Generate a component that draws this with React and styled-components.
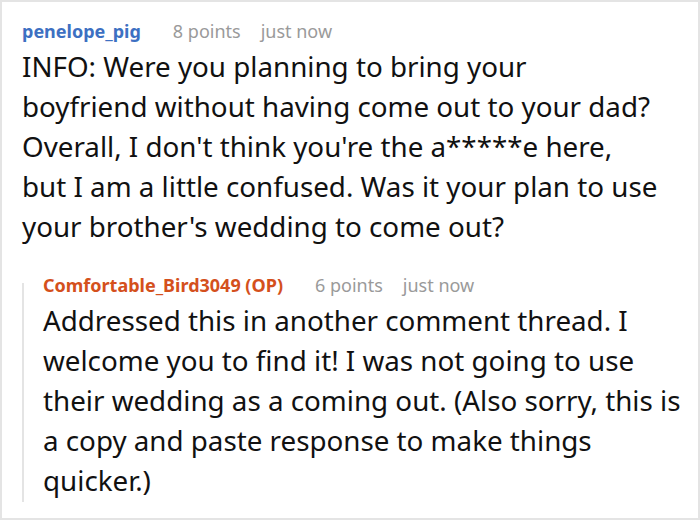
import React from 'react';
import styled, { createGlobalStyle } from 'styled-components';

const GlobalStyle = createGlobalStyle`
  html, body {
    margin: 0;
    padding: 0;
    background: #fff;
  }
  body {
    font-family: "Noto Sans", "Open Sans", sans-serif;
  }
`

const Frame = styled.div`
  width: 700px;
  height: 520px;
  box-sizing: border-box;
  border: 2px solid #e4e4e4;
  padding: 17px 0 0 20px;
  overflow: hidden;
`

const Comment = styled.div`
  display: flex;
  flex-direction: column;
`

const Header = styled.div`
  display: flex;
  align-items: baseline;
  gap: 20px;
  font-size: 18px;
  line-height: 24px;
  white-space: nowrap;
`

const Author = styled.span`
  font-weight: bold;
  color: ${p => p.op ? '#d4501c' : '#3d70c2'};
  margin-right: 12px;
`

const Meta = styled.span`
  color: #9a9a9a;
`

const Body = styled.p`
  margin: 3px 0 0 0;
  font-size: 27.75px;
  line-height: 40px;
  color: #111;
  white-space: nowrap;
`

const Replies = styled.div`
  margin-top: 27px;
  padding: 0 0 2px 21px;
  background: linear-gradient(#e4e4e4, #e4e4e4) no-repeat 0 10px / 2px calc(100% - 10px);
`

const comments = {
  parent: {
    author: 'penelope_pig',
    points: '8 points',
    time: 'just now',
    lines: [
      'INFO: Were you planning to bring your',
      'boyfriend without having come out to your dad?',
      "Overall, I don't think you're the a*****e here,",
      'but I am a little confused. Was it your plan to use',
      "your brother's wedding to come out?",
    ],
  },
  reply: {
    author: 'Comfortable_Bird3049 (OP)',
    points: '6 points',
    time: 'just now',
    lines: [
      'Addressed this in another comment thread. I',
      'welcome you to find it! I was not going to use',
      'their wedding as a coming out. (Also sorry, this is',
      'a copy and paste response to make things',
      'quicker.)',
    ],
  },
}

const CommentBlock = ({ data, op }) => (
  <Comment>
    <Header>
      <Author op={op}>{data.author}</Author>
      <Meta>{data.points}</Meta>
      <Meta>{data.time}</Meta>
    </Header>
    <Body>
      {data.lines.map((l, i) => (
        <React.Fragment key={i}>{l}{i < data.lines.length - 1 && <br />}</React.Fragment>
      ))}
    </Body>
  </Comment>
)

export default function App() {
  return (
    <>
      <GlobalStyle />
      <Frame>
        <CommentBlock data={comments.parent} />
        <Replies>
          <CommentBlock data={comments.reply} op />
        </Replies>
      </Frame>
    </>
  )
}
